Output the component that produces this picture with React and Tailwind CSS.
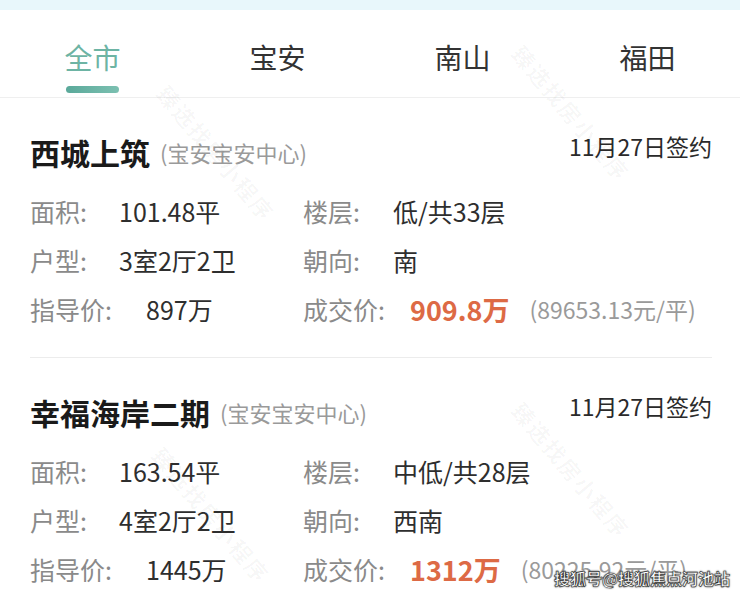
import React from 'react'

const tabs = ['全市', '宝安', '南山', '福田']

const deals = [
  {
    name: '西城上筑',
    area: '宝安宝安中心',
    date: '11月27日签约',
    size: '101.48平',
    floor: '低/共33层',
    layout: '3室2厅2卫',
    facing: '南',
    guide: '897万',
    price: '909.8万',
    unit: '(89653.13元/平)'
  },
  {
    name: '幸福海岸二期',
    area: '宝安宝安中心',
    date: '11月27日签约',
    size: '163.54平',
    floor: '中低/共28层',
    layout: '4室2厅2卫',
    facing: '西南',
    guide: '1445万',
    price: '1312万',
    unit: '(80225.92元/平)'
  }
]

const font = { fontFamily: '"Noto Sans CJK SC", "Noto Sans", sans-serif' }

function DealCard({ d, last }) {
  return (
    <div className={`mx-[30px] mr-[28px] ${last ? '' : 'border-b border-[#ececec]'} pb-[23px]`}>
      <div className="flex items-center justify-between h-[52px] mt-[28px]">
        <div className="flex items-center">
          <span className="text-[30px] font-bold text-[#1a1a1a] leading-none">{d.name}</span>
          <span className="ml-[10px] text-[22px] text-[#9a9a9a] leading-none">({d.area})</span>
        </div>
        <span className="text-[23px] text-[#2a2a2a] leading-none -mt-[12px]">{d.date}</span>
      </div>
      <div className="grid grid-cols-[273px_1fr] text-[25px] leading-none mt-[9px]">
        <div className="flex items-center h-[49px]">
          <span className="w-[89px] text-[#8a8a8a]">面积:</span>
          <span className="text-[#2e2e2e]">{d.size}</span>
        </div>
        <div className="flex items-center h-[49px]">
          <span className="w-[90px] text-[#8a8a8a]">楼层:</span>
          <span className="text-[#2e2e2e]">{d.floor}</span>
        </div>
        <div className="flex items-center h-[49px]">
          <span className="w-[89px] text-[#8a8a8a]">户型:</span>
          <span className="text-[#2e2e2e]">{d.layout}</span>
        </div>
        <div className="flex items-center h-[49px]">
          <span className="w-[90px] text-[#8a8a8a]">朝向:</span>
          <span className="text-[#2e2e2e]">{d.facing}</span>
        </div>
        <div className="flex items-center h-[49px]">
          <span className="w-[116px] text-[#8a8a8a]">指导价:</span>
          <span className="text-[#2e2e2e]">{d.guide}</span>
        </div>
        <div className="flex items-center h-[49px] whitespace-nowrap">
          <span className="w-[107px] text-[#8a8a8a]">成交价:</span>
          <span className="text-[27px] font-bold text-[#dd6a45]">{d.price}</span>
          <span className="ml-[20px] text-[23px] text-[#9a9a9a]">{d.unit}</span>
        </div>
      </div>
    </div>
  )
}

function Watermark({ className }) {
  return (
    <div className={`absolute text-[22px] font-bold text-[#000]/[0.035] rotate-[50deg] origin-top-left whitespace-nowrap pointer-events-none tracking-[2px] ${className}`}>
      臻选找房小程序
    </div>
  )
}

export default function App() {
  return (
    <div className="relative w-[740px] h-[593px] overflow-hidden bg-white" style={font}>
      <div className="h-[10px] bg-[#e8f7fb]" />

      {/* tabs */}
      <div className="grid grid-cols-4 h-[88px] border-b border-[#efefef]">
        {tabs.map((t, i) => (
          <div key={t} className="flex flex-col items-center pt-[33px]">
            <span className={`text-[28px] leading-none ${i === 0 ? 'text-[#6db4a4]' : 'text-[#333]'}`}>{t}</span>
            {i === 0 && <div className="mt-[15px] w-[53px] h-[7px] rounded-full bg-gradient-to-r from-[#5aa99a] to-[#7cc0b1]" />}
          </div>
        ))}
      </div>

      {deals.map((d, i) => (
        <DealCard key={d.name} d={d} last={i === deals.length - 1} />
      ))}

      <Watermark className="left-[530px] top-[38px]" />
      <Watermark className="left-[175px] top-[78px]" />
      <Watermark className="left-[530px] top-[395px]" />
      <Watermark className="left-[170px] top-[440px]" />

      <div
        className="absolute right-[10px] bottom-[7px] text-[16px] font-bold text-white leading-none"
        style={{ WebkitTextStroke: '0.6px #333', textShadow: '0 0 2px #000' }}
      >
        搜狐号@搜狐焦点河池站
      </div>
    </div>
  )
}
